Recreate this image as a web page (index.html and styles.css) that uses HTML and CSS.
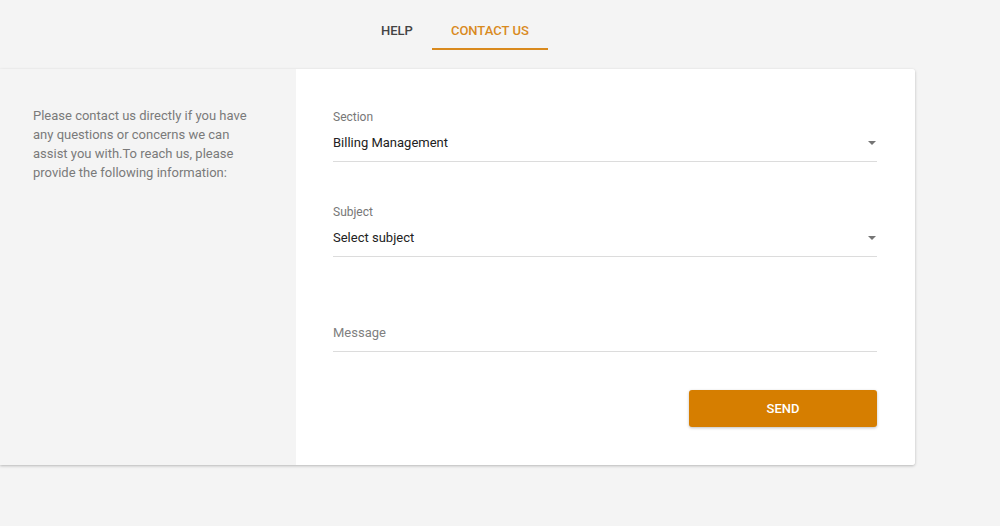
FILE: index.html
```html
<!DOCTYPE html>
<html lang="en">

<head>
    <meta charset="UTF-8">
    <meta name="viewport" content="width=device-width, initial-scale=1.0">
    <title>Contact Us</title>
    <link rel="stylesheet" href="styles.css">
</head>

<body>
    <nav class="tabs">
        <a class="tab">Help</a>
        <a class="tab active">Contact Us</a>
    </nav>

    <div class="contact-card">
        <div class="contact-info">
            <p>Please contact us directly if you have any questions or concerns we can assist you with.To reach us, please provide the following information:</p>
        </div>

        <form class="contact-form">
            <div class="field">
                <label>Section</label>
                <div class="field-input select">
                    <span>Billing Management</span>
                    <span class="arrow"></span>
                </div>
            </div>

            <div class="field">
                <label>Subject</label>
                <div class="field-input select">
                    <span>Select subject</span>
                    <span class="arrow"></span>
                </div>
            </div>

            <div class="field field-last">
                <label></label>
                <div class="field-input">
                    <span class="placeholder">Message</span>
                </div>
            </div>

            <div class="form-actions">
                <button type="button" class="send-btn">Send</button>
            </div>
        </form>
    </div>
</body>

</html>
```

FILE: styles.css
```css
* {
    margin: 0;
    padding: 0;
    box-sizing: border-box;
}

body {
    font-family: Roboto, 'Liberation Sans', sans-serif;
    background: #f4f4f4;
    min-height: 100vh;
}

.tabs {
    display: flex;
    height: 50px;
    padding-left: 362px;
}

.tab {
    padding: 23px 19px 0;
    font-size: 13px;
    line-height: 16px;
    font-weight: 500;
    text-transform: uppercase;
    color: #444;
    border-bottom: 2px solid transparent;
    cursor: pointer;
}

.tab.active {
    color: #d98a1e;
    border-bottom-color: #d98a1e;
}

.contact-card {
    display: flex;
    width: 915px;
    margin-top: 19px;
    background: #f4f4f4;
    border-radius: 0 3px 3px 0;
    box-shadow: 0 1px 3px rgba(0, 0, 0, 0.25);
}

.contact-info {
    width: 296px;
    padding: 37px 40px 0 33px;
}

.contact-info p {
    font-size: 13px;
    line-height: 19px;
    color: #7a7a7a;
}

.contact-form {
    flex: 1;
    background: white;
    padding: 40px 38px 38px 37px;
    border-radius: 0 3px 3px 0;
}

.field {
    margin-bottom: 42px;
}

.field-last {
    margin-bottom: 38px;
}

.field label {
    display: block;
    height: 16px;
    margin-bottom: 8px;
    font-size: 12px;
    line-height: 16px;
    color: #777;
}

.field-input {
    display: flex;
    align-items: center;
    justify-content: space-between;
    height: 29px;
    padding-bottom: 8px;
    font-size: 13px;
    line-height: 20px;
    color: #222;
    border-bottom: 1px solid #dcdcdc;
}

.placeholder {
    color: #808080;
}

.arrow {
    width: 0;
    height: 0;
    margin-right: 1px;
    border-left: 4px solid transparent;
    border-right: 4px solid transparent;
    border-top: 4px solid #757575;
}

.form-actions {
    display: flex;
    justify-content: flex-end;
}

.send-btn {
    width: 188px;
    height: 37px;
    background: #d67e00;
    color: white;
    border: none;
    border-radius: 3px;
    font-family: inherit;
    font-size: 13px;
    font-weight: 500;
    text-transform: uppercase;
    box-shadow: 0 1px 3px rgba(0, 0, 0, 0.25);
    cursor: pointer;
}
```
